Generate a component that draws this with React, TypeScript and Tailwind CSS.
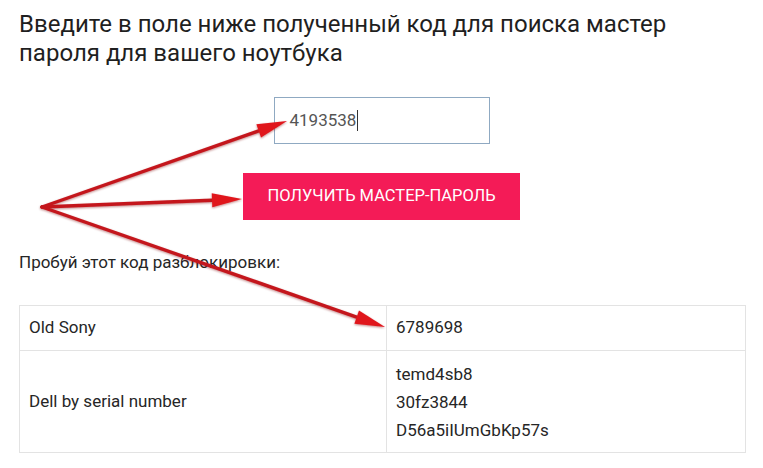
import React from "react";

function Arrows() {
  // red annotation arrows drawn over the page
  const heads = [
    { x: 287, y: 121 },
    { x: 242, y: 199 },
    { x: 385, y: 327 },
  ];
  const ox = 42;
  const oy = 207;
  return (
    <svg className="absolute left-0 top-0 pointer-events-none" width="763" height="468" viewBox="0 0 763 468">
      <defs>
        <filter id="sh" x="-10%" y="-10%" width="120%" height="120%">
          <feDropShadow dx="0" dy="1" stdDeviation="1.2" floodColor="#7a0000" floodOpacity="0.45" />
        </filter>
      </defs>
      <g filter="url(#sh)">
        {heads.map((h, i) => {
          const dx = h.x - ox;
          const dy = h.y - oy;
          const len = Math.sqrt(dx * dx + dy * dy);
          const ux = dx / len;
          const uy = dy / len;
          const bx = h.x - ux * 30;
          const by = h.y - uy * 30;
          const nx = -uy;
          const ny = ux;
          return (
            <g key={i}>
              <line x1={ox} y1={oy} x2={bx} y2={by} stroke="#c4161c" strokeWidth="3.4" strokeLinecap="round" />
              <polygon
                points={`${h.x},${h.y} ${bx + nx * 7},${by + ny * 7} ${bx - nx * 7},${by - ny * 7}`}
                fill="#e0161c"
              />
            </g>
          );
        })}
      </g>
    </svg>
  );
}

export default function App() {
  return (
    <main className="relative w-[763px] h-[468px] bg-white overflow-hidden text-[#222] font-['Roboto',_'Liberation_Sans',_sans-serif]">
      <h1 className="pl-[19px] pt-[10px] text-[24px] leading-[29px] font-normal text-[#1f1f1f]">
        Введите в поле ниже полученный код для поиска мастер
        <br />
        пароля для вашего ноутбука
      </h1>
      <section className="flex flex-col items-center mt-[29px]">
        <div className="w-[216px] h-[47px] border border-[#8fa9c2] flex items-center pl-[15px] text-[17px] text-[#555]">
          4193538<span className="w-px h-[21px] bg-[#333] ml-[1px]"></span>
        </div>
        <button className="mt-[29px] w-[277px] h-[47px] bg-[#f41b57] text-white text-[16.5px] uppercase">
          Получить мастер-пароль
        </button>
      </section>
      <p className="pl-[19px] mt-[32px] text-[17px] leading-[20px] text-[#262626]">Пробуй этот код разблокировки:</p>
      <table className="ml-[19px] mt-[33px] w-[727px] border-collapse text-[17px] text-[#262626]">
        <tbody>
          <tr className="h-[45px]">
            <td className="w-[367px] border border-[#e3e3e3] pl-[9px] align-middle">Old Sony</td>
            <td className="border border-[#e3e3e3] pl-[9px] align-middle">6789698</td>
          </tr>
          <tr className="h-[102px]">
            <td className="border border-[#e3e3e3] pl-[9px] align-middle">Dell by serial number</td>
            <td className="border border-[#e3e3e3] pl-[9px] align-middle leading-[28px]">
              temd4sb8
              <br />
              30fz3844
              <br />
              D56a5iIUmGbKp57s
            </td>
          </tr>
        </tbody>
      </table>
      <Arrows />
    </main>
  );
}
